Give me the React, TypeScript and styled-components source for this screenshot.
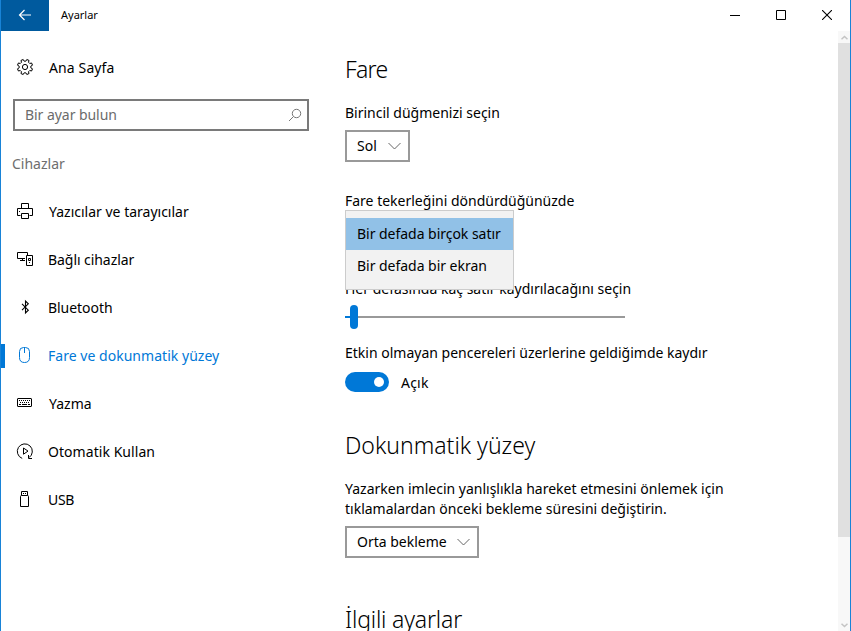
import React from "react";
import styled, { createGlobalStyle } from "styled-components";

const accent = "#0078d7";

const GlobalStyle = createGlobalStyle`
  * { box-sizing: border-box; }
  html, body { margin: 0; padding: 0; overflow: hidden; background: #fff; }
  svg { display: block; flex: none; }
`;

const Window = styled.div`
  display: flex;
  flex-direction: column;
  width: 851px;
  height: 631px;
  overflow: hidden;
  border: solid #1883d7;
  border-width: 0 1px;
  background: #fff;
  color: #000;
  font: 14px/20px "Noto Sans", "Open Sans", sans-serif;
`;

const TitleBar = styled.header`
  display: flex;
  flex: none;
  height: 31px;
`;

const BackButton = styled.button`
  display: flex;
  align-items: center;
  justify-content: center;
  width: 48px;
  height: 31px;
  padding: 0 0 1px;
  border: 0;
  background: #005a9e;
`;

const Title = styled.span`
  flex: 1;
  padding-left: 12px;
  font-size: 11px;
  line-height: 30px;
`;

const CaptionButton = styled.button`
  display: flex;
  align-items: center;
  justify-content: center;
  width: 46px;
  height: 30px;
  padding: 0;
  border: 0;
  background: none;
`;

const Body = styled.div`
  display: flex;
  flex: 1;
  min-height: 0;
`;

const Sidebar = styled.nav`
  flex: none;
  width: 344px;
  padding-top: 13px;
`;

const NavItem = styled.a<{ $active?: boolean }>`
  display: flex;
  align-items: center;
  height: 48px;
  color: ${(p) => (p.$active ? accent : "#000")};
`;

const NavText = styled.span<{ $indent?: number; $tracking?: number }>`
  padding-left: ${(p) => p.$indent ?? 0}px;
  letter-spacing: ${(p) => p.$tracking ?? 0}px;
`;

const Marker = styled.span<{ $active?: boolean }>`
  width: 4px;
  height: 24px;
  margin-right: 10px;
  background: ${(p) => (p.$active ? accent : "transparent")};
`;

const NavIcon = styled.span`
  width: 20px;
  height: 20px;
  margin-right: 13px;
`;

const SearchBox = styled.div`
  display: flex;
  align-items: center;
  justify-content: space-between;
  width: 296px;
  height: 32px;
  margin: 7px 0 23px 12px;
  padding: 0 5px 0 10px;
  border: 2px solid #7a7a7a;
  color: #6b6b6b;
  letter-spacing: -0.05px;
`;

const GroupTitle = styled.div`
  height: 34px;
  padding-left: 11px;
  color: #6e6e6e;
`;

const Content = styled.main`
  flex: 1;
  padding-top: 22px;
`;

const Heading = styled.h2<{ $tracking?: number }>`
  height: 50px;
  margin: 0;
  font-size: 23px;
  font-weight: 300;
  line-height: 32px;
  letter-spacing: ${(p) => p.$tracking ?? 0}px;
`;

const Label = styled.p`
  margin: 0 0 7px;
`;

const Select = styled.button<{ $width: number; $after: number }>`
  display: flex;
  align-items: center;
  justify-content: space-between;
  width: ${(p) => p.$width}px;
  height: 32px;
  margin: 0 0 ${(p) => p.$after}px;
  padding: 0 7px 0 10px;
  border: 2px solid #999;
  background: #fff;
  color: #000;
  font: inherit;
`;

const OpenSelect = styled.div`
  position: relative;
  width: 169px;
  height: 32px;
  margin-bottom: 29px;
`;

const Popup = styled.div`
  position: absolute;
  z-index: 1;
  top: -8px;
  left: 0;
  width: 169px;
  height: 80px;
  padding: 7px 0;
  border: 1px solid #ccc;
  background: #f2f2f2;
`;

const Option = styled.div<{ $selected?: boolean }>`
  height: 32px;
  padding-left: 11px;
  line-height: 32px;
  letter-spacing: -0.03px;
  background: ${(p) => (p.$selected ? "#91c1e7" : "transparent")};
`;

const Slider = styled.div`
  display: flex;
  align-items: center;
  width: 280px;
  height: 24px;
  margin: -1px 0 14px;
`;

const Track = styled.span<{ $filled?: boolean }>`
  flex: ${(p) => (p.$filled ? "0 0 5px" : "1")};
  height: 2px;
  background: ${(p) => (p.$filled ? accent : "#999")};
`;

const Thumb = styled.span`
  width: 8px;
  height: 24px;
  border-radius: 4px;
  background: ${accent};
`;

const ToggleRow = styled.div`
  display: flex;
  gap: 12px;
  height: 20px;
  margin: 9px 0 37px;
`;

const Toggle = styled.span`
  display: flex;
  align-items: center;
  justify-content: flex-end;
  width: 44px;
  height: 20px;
  padding-right: 5px;
  border-radius: 10px;
  background: ${accent};
`;

const Knob = styled.span`
  width: 10px;
  height: 10px;
  border-radius: 50%;
  background: #fff;
`;

const ToggleText = styled.span`
  line-height: 22px;
  letter-spacing: 0.2px;
`;

const ScrollBar = styled.div`
  display: flex;
  flex-direction: column;
  justify-content: space-between;
  align-items: center;
  width: 12px;
  background: #f8f8f8;
`;

const ScrollThumb = styled.div`
  width: 12px;
  height: 494px;
  margin: 0 0 auto;
  background: #e0e0e0;
`;

const ScrollArrow = styled.span`
  display: flex;
  align-items: center;
  justify-content: center;
  height: 12px;
`;

const Icon = ({ children }: { children: React.ReactNode }) => (
  <NavIcon>
    <svg width="20" height="20" viewBox="0 0 20 20" fill="none" stroke="currentColor">
      {children}
    </svg>
  </NavIcon>
);

const gearPath = (() => {
  const points: string[] = [];
  for (let i = 0; i < 8; i++) {
    for (const [r, offset] of [[5.9, -14], [7.7, -9], [7.7, 9], [5.9, 14]]) {
      const a = ((i * 45 + 22.5 + offset) * Math.PI) / 180;
      points.push(`${(10 + r * Math.cos(a)).toFixed(2)} ${(9 + r * Math.sin(a)).toFixed(2)}`);
    }
  }
  return `M${points.join("L")}Z`;
})();

const GearIcon = () => (
  <Icon>
    <path d={gearPath} strokeLinejoin="round" />
    <circle cx="10" cy="9" r="2.6" />
  </Icon>
);

const PrinterIcon = () => (
  <Icon>
    <path d="M6.5 7V1.5H13.5V7M5.5 13.5H2.5V6.5H17.5V13.5H14.5M6.5 11.5H13.5V16.5H6.5Z" />
    <path d="M4 9.5H5" />
  </Icon>
);

const DevicesIcon = () => (
  <Icon>
    <path d="M10 8.5H2.5V2.5H12.5V5M7.5 9V11M5 10.5H10M11.5 5.5H17.5V15.5H11.5Z" />
    <path d="M13.5 8.5H15.5V10.5H13.5ZM14 12.5H15" />
  </Icon>
);

const BluetoothIcon = () => (
  <Icon>
    <path d="M7 5.8L13.3 12.2L10.5 15V3L13.3 5.8L7 12.2" strokeWidth="1.1" />
  </Icon>
);

const MouseIcon = () => (
  <Icon>
    <path d="M4.5 5.500Q4.500 1.500 8.500 1.500H10.500Q14.500 1.500 14.500 5.500V11.500Q14.500 16.500 9.500 16.500Q4.500 16.500 4.500 11.500ZM9.500 2V7" />
  </Icon>
);

const KeyboardIcon = () => (
  <Icon>
    <rect x="2.5" y="4.5" width="14" height="8" rx="0.5" />
    <path d="M4 6.5H15M5 8.5H15" strokeDasharray="1 1" />
    <path d="M4 10.5H6M7 10.5H12M13 10.5H15" />
  </Icon>
);

const AutoPlayIcon = () => (
  <Icon>
    <path d="M7.2 16.4A7.5 7.5 0 1 1 14 15.6M17 16.5H13.5V13M8.5 6V12.2L13 9.1Z" />
  </Icon>
);

const UsbIcon = () => (
  <Icon>
    <path d="M6.5 5.5V1.5H12.5V5.5M5.5 6.5Q5.5 5.5 6.5 5.5H12.5Q13.5 5.5 13.5 6.5V16.5H5.5ZM8 3.5H9M10 3.5H11" />
  </Icon>
);

const Chevron = () => (
  <svg width="13" height="8" viewBox="0 0 13 8" fill="none" stroke="#666">
    <path d="M0.5 1L6.5 7L12.5 1" />
  </svg>
);

const ScrollChevron = ({ down }: { down?: boolean }) => (
  <ScrollArrow>
    <svg width="7" height="5" viewBox="0 0 7 5" fill="none" stroke="#c4c4c4" strokeWidth="1.5">
      <path d={down ? "M0.5 0.7L3.5 3.5L6.5 0.7" : "M0.5 4.3L3.5 1.5L6.5 4.3"} />
    </svg>
  </ScrollArrow>
);

const navItems = [
  { text: "Yazıcılar ve tarayıcılar", icon: PrinterIcon, indent: 1 },
  { text: "Bağlı cihazlar", icon: DevicesIcon, tracking: -0.06 },
  { text: "Bluetooth", icon: BluetoothIcon, tracking: -0.05 },
  { text: "Fare ve dokunmatik yüzey", icon: MouseIcon, active: true, tracking: 0.03 },
  { text: "Yazma", icon: KeyboardIcon, indent: 1 },
  { text: "Otomatik Kullan", icon: AutoPlayIcon, tracking: 0.05 },
  { text: "USB", icon: UsbIcon, tracking: -0.3 },
];

export default function App() {
  return (
    <Window>
      <GlobalStyle />
      <TitleBar>
        <BackButton aria-label="Geri">
          <svg width="14" height="12" viewBox="0 0 14 12" fill="none" stroke="#fff" strokeWidth="1.2">
            <path d="M13 6H1.5M6.5 1L1.5 6L6.5 11" />
          </svg>
        </BackButton>
        <Title>Ayarlar</Title>
        <CaptionButton aria-label="Simge durumuna küçült">
          <svg width="10" height="10" viewBox="0 0 10 10" stroke="#000">
            <path d="M0 5.5H10" />
          </svg>
        </CaptionButton>
        <CaptionButton aria-label="Ekranı kapla">
          <svg width="10" height="10" viewBox="0 0 10 10" fill="none" stroke="#000">
            <path d="M0.5 0.5H9.5V9.5H0.5Z" />
          </svg>
        </CaptionButton>
        <CaptionButton aria-label="Kapat">
          <svg width="10" height="10" viewBox="0 0 10 10" stroke="#000" strokeWidth="1.1">
            <path d="M0 0L10 10M10 0L0 10" />
          </svg>
        </CaptionButton>
      </TitleBar>
      <Body>
        <Sidebar>
          <NavItem>
            <Marker />
            <GearIcon />
            <NavText $indent={1} $tracking={0.12}>Ana Sayfa</NavText>
          </NavItem>
          <SearchBox>
            Bir ayar bulun
            <svg width="14" height="14" viewBox="0 0 14 14" fill="none" stroke="#777">
              <circle cx="8.5" cy="5.5" r="4.2" />
              <path d="M5.5 8.5L1 13" />
            </svg>
          </SearchBox>
          <GroupTitle>Cihazlar</GroupTitle>
          {navItems.map(({ text, icon: ItemIcon, active, indent, tracking }) => (
            <NavItem key={text} $active={active}>
              <Marker $active={active} />
              <ItemIcon />
              <NavText $indent={indent} $tracking={tracking}>{text}</NavText>
            </NavItem>
          ))}
        </Sidebar>
        <Content>
          <Heading $tracking={-0.7}>Fare</Heading>
          <Label>Birincil düğmenizi seçin</Label>
          <Select $width={65} $after={29}>
            Sol
            <Chevron />
          </Select>
          <Label>Fare tekerleğini döndürdüğünüzde</Label>
          <OpenSelect>
            <Popup>
              <Option $selected>Bir defada birçok satır</Option>
              <Option>Bir defada bir ekran</Option>
            </Popup>
          </OpenSelect>
          <Label>Her defasında kaç satır kaydırılacağını seçin</Label>
          <Slider>
            <Track $filled />
            <Thumb />
            <Track />
          </Slider>
          <Label>Etkin olmayan pencereleri üzerlerine geldiğimde kaydır</Label>
          <ToggleRow>
            <Toggle>
              <Knob />
            </Toggle>
            <ToggleText>Açık</ToggleText>
          </ToggleRow>
          <Heading>Dokunmatik yüzey</Heading>
          <Label>
            Yazarken imlecin yanlışlıkla hareket etmesini önlemek için
            <br />
            tıklamalardan önceki bekleme süresini değiştirin.
          </Label>
          <Select $width={134} $after={45}>
            Orta bekleme
            <Chevron />
          </Select>
          <Heading $tracking={-0.18}>İlgili ayarlar</Heading>
        </Content>
        <ScrollBar>
          <ScrollChevron />
          <ScrollThumb />
          <ScrollChevron down />
        </ScrollBar>
      </Body>
    </Window>
  );
}
